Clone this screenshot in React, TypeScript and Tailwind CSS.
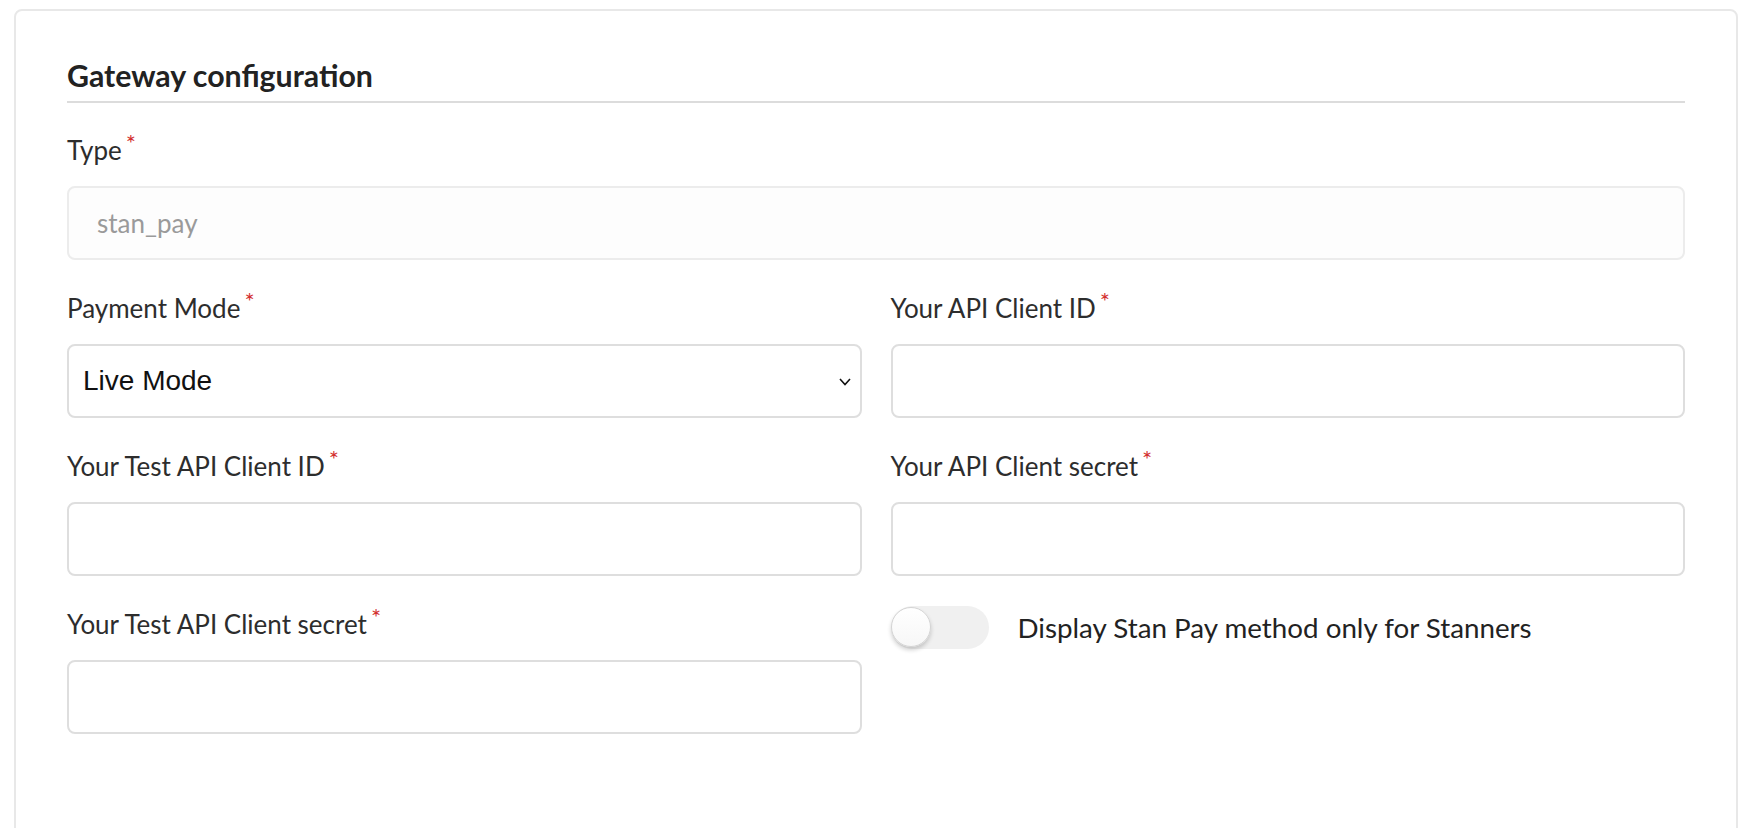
import React from "react";

const Req = () => (
  <span className="relative -top-[8px] ml-[4px] text-[24px] leading-none text-[#d3302f]">*</span>
);

const Label = ({ children }: { children: React.ReactNode }) => (
  <label className="block text-[26px] leading-[39px] text-[#2d2d2d] mb-[16px]">
    {children}
    <Req />
  </label>
);

const TextInput = () => (
  <input
    type="text"
    className="block w-full h-[74px] rounded-[8px] border-2 border-[#dedede] bg-white outline-none"
  />
);

export default function App() {
  return (
    <div
      className="h-[828px] w-full overflow-hidden bg-white pt-[9px] pl-[14px] pr-[18px]"
      style={{ fontFamily: "Lato, 'Noto Sans', sans-serif" }}
    >
      <div className="h-[900px] rounded-[8px] border-2 border-[#e8e8e8] bg-white px-[51px] pt-[46px]">
        <h2 className="border-b-2 border-[#dcdcdc] pb-[8px] text-[30.3px] font-bold leading-[36px] text-[#222]">
          Gateway configuration
        </h2>

        <div className="pt-[28px]">
          <div className="mb-[29px]">
            <Label>Type</Label>
            <div className="flex h-[74px] w-full items-center rounded-[8px] border-2 border-[#ececec] bg-[#fdfdfd] px-[28px] text-[26px] text-[#9a9a9a]">
              stan_pay
            </div>
          </div>

          <div className="grid grid-cols-2 gap-x-[29px] gap-y-[29px]">
            <div>
              <Label>Payment Mode</Label>
              <div className="relative">
                <select
                  defaultValue="live"
                  className="block h-[74px] w-full appearance-none rounded-[8px] border-2 border-[#dedede] bg-white pl-[14px] text-[28px] text-[#111] outline-none"
                  style={{ fontFamily: "'Liberation Sans', Arial, sans-serif" }}
                >
                  <option value="live">Live Mode</option>
                  <option value="test">Test Mode</option>
                </select>
                <svg
                  className="pointer-events-none absolute right-[11px] top-[34px]"
                  width="12"
                  height="8"
                  viewBox="0 0 12 8"
                  fill="none"
                >
                  <polyline points="1,1 6,6.5 11,1" stroke="#111" strokeWidth="1.6" />
                </svg>
              </div>
            </div>

            <div>
              <Label>Your API Client ID</Label>
              <TextInput />
            </div>

            <div>
              <Label>Your Test API Client ID</Label>
              <TextInput />
            </div>

            <div>
              <Label>Your API Client secret</Label>
              <TextInput />
            </div>

            <div>
              <Label>Your Test API Client secret</Label>
              <TextInput />
            </div>

            <div className="flex items-center gap-[29px] pt-[1px] self-start">
              <div className="relative h-[43px] w-[98px] shrink-0 rounded-full bg-[#f0f0f0]">
                <div className="absolute left-0 top-[1px] h-[40px] w-[40px] rounded-full border-[1.5px] border-[#d4d4d4] bg-gradient-to-b from-white to-[#f7f7f7] shadow-[0_3px_4px_rgba(0,0,0,0.18)]" />
              </div>
              <span className="text-[27.75px] leading-[39px] text-[#222]">
                Display Stan Pay method only for Stanners
              </span>
            </div>
          </div>
        </div>
      </div>
    </div>
  );
}
